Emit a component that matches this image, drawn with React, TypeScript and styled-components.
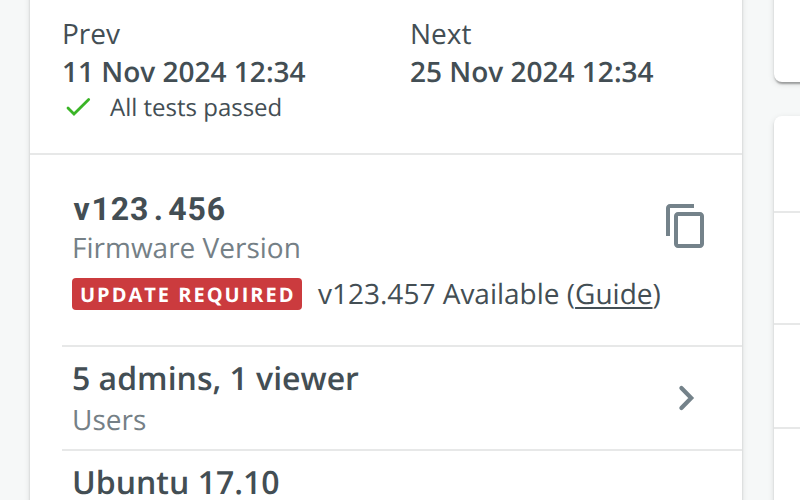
import React from 'react';
import styled, { createGlobalStyle } from 'styled-components';

const GlobalStyle = createGlobalStyle`
  * { box-sizing: border-box; }
  body {
    margin: 0;
    background: #f6f8f8;
    color: #434e54;
    font-family: 'Open Sans', 'Noto Sans', sans-serif;
    font-size: 28px;
    text-rendering: geometricPrecision;
    overflow: hidden;
  }
`;

const Page = styled.main`
  display: flex;
  gap: 32px;
  width: 800px;
  height: 500px;
  padding-left: 30px;
  overflow: hidden;
`;

const Card = styled.section<{ $height: number; $corners: string }>`
  flex: none;
  height: ${(p) => p.$height}px;
  background: #fff;
  border-radius: ${(p) => p.$corners};
  box-shadow: 0 4px 2px -2px rgba(0, 0, 0, 0.2), 0 2px 2px 0 rgba(0, 0, 0, 0.14),
    0 2px 6px 0 rgba(0, 0, 0, 0.12);
`;

const MainCard = styled(Card)`
  width: 712px;
  margin-top: -20px;
  padding-top: 20px;
`;

const SideColumn = styled.div`
  display: flex;
  flex: none;
  flex-direction: column;
  gap: 34px;
  width: 160px;
  margin-top: -20px;
`;

const SideRow = styled.div<{ $height: number }>`
  height: ${(p) => p.$height}px;
  border-bottom: 2px solid #e7e8e8;
`;

const Schedule = styled.div`
  display: grid;
  grid-template-columns: 348px 1fr;
  height: 155px;
  padding: 15px 0 0 32px;
  border-bottom: 2px solid #e7e8e8;
`;

const Label = styled.div`
  line-height: 38px;
`;

const DateText = styled.div`
  font-weight: 600;
  line-height: 38px;
`;

const TestResult = styled.div`
  display: flex;
  align-items: center;
  gap: 16px;
  height: 34px;
  font-size: 24px;
  line-height: 34px;
`;

const List = styled.div`
  padding-left: 32px;
`;

const Row = styled.div<{ $height: number; $top: number }>`
  display: flex;
  justify-content: space-between;
  height: ${(p) => p.$height}px;
  padding: ${(p) => p.$top}px 32px 0 10px;
  border-bottom: 2px solid #e7e8e8;
`;

const Primary = styled.div`
  font-size: 32px;
  font-weight: 600;
  line-height: 42px;
`;

const Version = styled.div`
  display: flex;
  font-family: Roboto, sans-serif;
  font-size: 32px;
  font-weight: 700;
  line-height: 42px;
`;

const Cell = styled.span`
  width: 19.2px;
  text-align: center;
`;

const Secondary = styled.div<{ $lineHeight: number }>`
  color: #758086;
  line-height: ${(p) => p.$lineHeight}px;
`;

const Update = styled.div`
  display: flex;
  gap: 16px;
  height: 32px;
  margin-top: 12px;
  line-height: 33px;
  white-space: nowrap;
`;

const Badge = styled.span`
  width: 230px;
  height: 32px;
  padding-left: 8px;
  border-radius: 4px;
  background: #cb3b3e;
  color: #fff;
  font-size: 20px;
  font-weight: 700;
  letter-spacing: 2px;
  line-height: 33px;
`;

const Guide = styled.a`
  text-decoration: underline;
  text-decoration-thickness: 2px;
  text-underline-offset: 3px;
`;

const Icon = styled.svg<{ $top?: number }>`
  display: block;
  flex: none;
  margin-top: ${(p) => p.$top ?? 0}px;
`;

const VERSION = 'v123.456';

export default function App() {
  return (
    <>
      <GlobalStyle />
      <Page>
        <MainCard $height={560} $corners="0">
          <Schedule>
            <div>
              <Label>Prev</Label>
              <DateText>11 Nov 2024 12:34</DateText>
              <TestResult>
                <Icon $top={-3} width="32" height="32" viewBox="0 0 24 24" fill="none" stroke="#3bb527" strokeWidth="2.1" strokeLinecap="round">
                  <path d="M4.5 12.7 9 17.3 20 6.4" />
                </Icon>
                All tests passed
              </TestResult>
            </div>
            <div>
              <Label>Next</Label>
              <DateText>25 Nov 2024 12:34</DateText>
            </div>
          </Schedule>
          <List>
            <Row $height={192} $top={33}>
              <div>
                <Version>
                  {VERSION.split('').map((char, i) => (
                    <Cell key={i}>{char}</Cell>
                  ))}
                </Version>
                <Secondary $lineHeight={36}>Firmware Version</Secondary>
                <Update>
                  <Badge>UPDATE REQUIRED</Badge>
                  <span>
                    v123.457 Available (<Guide>Guide</Guide>)
                  </span>
                </Update>
              </div>
              <Icon $top={14} width="48" height="48" viewBox="0 0 24 24" fill="#74828a">
                <path d="M16 1H4c-1.1 0-2 .9-2 2v14h2V3h12V1zm3 4H8c-1.1 0-2 .9-2 2v14c0 1.1.9 2 2 2h11c1.1 0 2-.9 2-2V7c0-1.1-.9-2-2-2zm0 16H8V7h11v14z" />
              </Icon>
            </Row>
            <Row $height={104} $top={11}>
              <div>
                <Primary>5 admins, 1 viewer</Primary>
                <Secondary $lineHeight={40}>Users</Secondary>
              </div>
              <Icon $top={16} width="48" height="48" viewBox="0 0 24 24" fill="none" stroke="#74828a" strokeWidth="2.1" strokeLinecap="round">
                <path d="M9.7 7 14.6 12 9.7 17" />
              </Icon>
            </Row>
            <Row $height={104} $top={11}>
              <Primary>Ubuntu 17.10</Primary>
            </Row>
          </List>
        </MainCard>
        <SideColumn>
          <Card $height={102} $corners="0 0 8px 8px" />
          <Card $height={424} $corners="8px 8px 0 0">
            <SideRow $height={97} />
            <SideRow $height={112} />
            <SideRow $height={104} />
          </Card>
        </SideColumn>
      </Page>
    </>
  );
}
